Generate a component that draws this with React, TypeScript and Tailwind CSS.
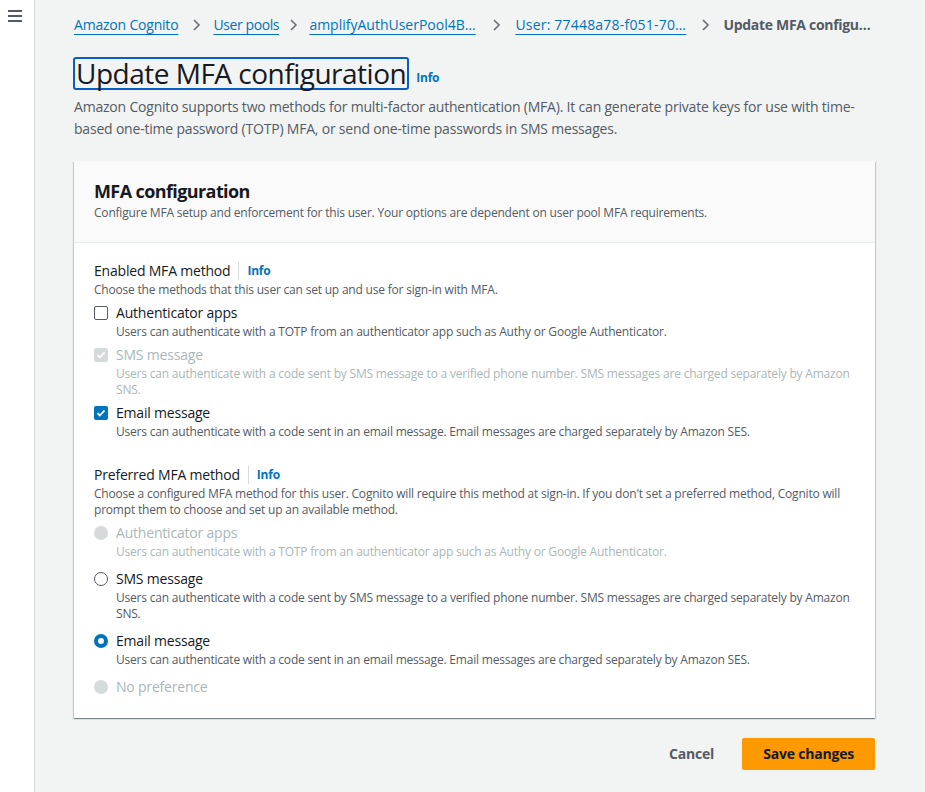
import React from "react";

const FONT = { fontFamily: '"Open Sans", "Noto Sans", Arial, sans-serif' };

function Chevron({ cls }: { cls: string }) {
  return (
    <svg width="16" height="16" viewBox="0 0 16 16" className={`shrink-0 ${cls}`}>
      <path d="M6 3l5 5-5 5" fill="none" stroke="#687078" strokeWidth="1.6" />
    </svg>
  );
}

function Checkbox({ state }: { state: "off" | "on" | "disabledOn" }) {
  if (state === "off")
    return <span className="mt-[4px] inline-block h-[14px] w-[14px] shrink-0 rounded-[2px] border border-[#545b64] bg-white" />;
  const bg = state === "on" ? "bg-[#0073bb]" : "bg-[#d5dbdb]";
  return (
    <span className={`mt-[4px] inline-flex h-[14px] w-[14px] shrink-0 items-center justify-center rounded-[2px] ${bg}`}>
      <svg width="10" height="10" viewBox="0 0 10 10">
        <path d="M1.5 5.2l2.3 2.3L8.5 2.5" fill="none" stroke="white" strokeWidth="1.8" />
      </svg>
    </span>
  );
}

function Radio({ state }: { state: "off" | "on" | "disabled" }) {
  if (state === "off")
    return <span className="mt-[4px] inline-block h-[14px] w-[14px] shrink-0 rounded-full border-[1.5px] border-[#545b64] bg-white" />;
  if (state === "on")
    return <span className="mt-[4px] inline-block h-[14px] w-[14px] shrink-0 rounded-full border-[4px] border-[#0073bb] bg-white" />;
  return <span className="mt-[4px] inline-block h-[14px] w-[14px] shrink-0 rounded-full bg-[#d5dbdb]" />;
}

function Option({
  control,
  label,
  desc,
  disabled,
}: {
  control: React.ReactNode;
  label: string;
  desc?: React.ReactNode;
  disabled?: boolean;
}) {
  return (
    <div className="flex gap-[8px]">
      {control}
      <div className="min-w-0">
        <div className={`text-[14px] leading-[22px] ${disabled ? "text-[#aab7b8]" : "text-[#16191f]"}`}>{label}</div>
        {desc && (
          <div className={`text-[12px] leading-[16px] ${disabled ? "text-[#aab7b8]" : "text-[#545b64]"}`}>{desc}</div>
        )}
      </div>
    </div>
  );
}

function FieldLabel({ text }: { text: string }) {
  return (
    <div className="flex items-center text-[14px] leading-[22px] text-[#16191f]">
      <span>{text}</span>
      <span className="mx-[8px] h-[18px] w-px bg-[#d5dbdb]" />
      <span className="text-[12px] font-bold text-[#0073bb]">Info</span>
    </div>
  );
}

export default function App() {
  return (
    <div className="flex min-h-[792px] w-full bg-[#f2f3f3] tracking-[-0.2px]" style={FONT}>
      <div className="w-[35px] shrink-0 border-r border-[#d5dbdb] bg-white">
        <div className="ml-[8px] mt-[10px] flex w-[14px] flex-col gap-[3px]">
          <span className="h-[2px] w-[14px] bg-[#545b64]" />
          <span className="h-[2px] w-[14px] bg-[#545b64]" />
          <span className="h-[2px] w-[14px] bg-[#545b64]" />
        </div>
      </div>

      <div className="min-w-0 flex-1 pl-[39px] pr-[50px]">
        {/* Breadcrumb */}
        <div className="mt-[14px] flex items-center text-[14px] leading-[22px] whitespace-nowrap">
          <a className="text-[#0073bb] underline decoration-[#0073bb] underline-offset-[4px]">Amazon Cognito</a>
          <Chevron cls="ml-[10px] mr-[9px]" />
          <a className="w-[64px] text-[#0073bb] underline underline-offset-[4px] tracking-[-0.4px]">User pools</a>
          <Chevron cls="ml-[8px] mr-[8px]" />
          <a className="w-[167px] text-[#0073bb] underline underline-offset-[4px] tracking-[0px]">amplifyAuthUserPool4B…</a>
          <Chevron cls="ml-[12px] mr-[11px]" />
          <a className="w-[171px] text-[#0073bb] underline underline-offset-[4px] tracking-[0.2px]">User: 77448a78-f051-70…</a>
          <Chevron cls="ml-[11px] mr-[10px]" />
          <span className="font-bold tracking-[-0.3px] text-[#545b64]">Update MFA configu…</span>
        </div>

        {/* Title */}
        <div className="mt-[21px] flex items-end">
          <h1 className="-ml-[1px] rounded-[3px] border-2 border-[#0a5cc5] px-[1px] text-[28px] leading-[29px] font-normal tracking-[-0.5px] text-[#16191f]">
            Update MFA configuration
          </h1>
          <span className="mb-[3px] ml-[7px] text-[12px] font-bold text-[#0073bb]">Info</span>
        </div>
        <p className="mt-[6px] text-[14px] leading-[22px] text-[#545b64]">
          Amazon Cognito supports two methods for multi-factor authentication (MFA). It can generate private keys for use with time-
          <br />
          based one-time password (TOTP) MFA, or send one-time passwords in SMS messages.
        </p>

        {/* Card */}
        <div className="mt-[21px] bg-white shadow-[0_1px_1px_0_rgba(0,28,36,0.3),1px_1px_1px_0_rgba(0,28,36,0.15),-1px_1px_1px_0_rgba(0,28,36,0.15)]">
          <div className="border-b border-[#eaeded] bg-[#fafafa] px-[20px] pt-[19px] pb-[21px]">
            <h2 className="text-[18px] leading-[22px] font-bold tracking-[-0.6px] text-[#16191f]">MFA configuration</h2>
            <p className="mt-[3px] text-[12px] leading-[16px] text-[#545b64]">
              Configure MFA setup and enforcement for this user. Your options are dependent on user pool MFA requirements.
            </p>
          </div>
          <div className="px-[20px] pt-[17px] pb-[20px]">
            <FieldLabel text="Enabled MFA method" />
            <p className="text-[12px] leading-[16px] text-[#545b64]">
              Choose the methods that this user can set up and use for sign-in with MFA.
            </p>
            <div className="mt-[4px] flex flex-col gap-[4px]">
              <Option
                control={<Checkbox state="off" />}
                label="Authenticator apps"
                desc="Users can authenticate with a TOTP from an authenticator app such as Authy or Google Authenticator."
              />
              <Option
                control={<Checkbox state="disabledOn" />}
                label="SMS message"
                disabled
                desc={
                  <>
                    Users can authenticate with a code sent by SMS message to a verified phone number. SMS messages are charged separately by Amazon
                    <br />
                    SNS.
                  </>
                }
              />
              <Option
                control={<Checkbox state="on" />}
                label="Email message"
                desc="Users can authenticate with a code sent in an email message. Email messages are charged separately by Amazon SES."
              />
            </div>

            <div className="mt-[24px]">
              <FieldLabel text="Preferred MFA method" />
              <p className="text-[12px] leading-[16px] text-[#545b64]">
                Choose a configured MFA method for this user. Cognito will require this method at sign-in. If you don't set a preferred method, Cognito will
                <br />
                prompt them to choose and set up an available method.
              </p>
              <div className="mt-[4px] flex flex-col gap-[8px]">
                <Option
                  control={<Radio state="disabled" />}
                  label="Authenticator apps"
                  disabled
                  desc="Users can authenticate with a TOTP from an authenticator app such as Authy or Google Authenticator."
                />
                <Option
                  control={<Radio state="off" />}
                  label="SMS message"
                  desc={
                    <>
                      Users can authenticate with a code sent by SMS message to a verified phone number. SMS messages are charged separately by Amazon
                      <br />
                      SNS.
                    </>
                  }
                />
                <Option
                  control={<Radio state="on" />}
                  label="Email message"
                  desc="Users can authenticate with a code sent in an email message. Email messages are charged separately by Amazon SES."
                />
                <Option control={<Radio state="disabled" />} label="No preference" disabled />
              </div>
            </div>
          </div>
        </div>

        {/* Actions */}
        <div className="mt-[20px] flex items-center justify-end gap-[8px]">
          <button className="px-[20px] text-[14px] leading-[32px] font-bold text-[#545b64]">Cancel</button>
          <button className="rounded-[2px] bg-[#ff9900] px-[21px] text-[14px] leading-[32px] font-bold text-[#16191f]">
            Save changes
          </button>
        </div>
      </div>
    </div>
  );
}
